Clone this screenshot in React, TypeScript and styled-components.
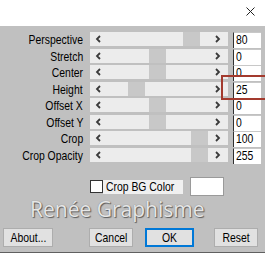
import React from "react";
import styled, { createGlobalStyle } from "styled-components";

const GlobalStyle = createGlobalStyle`
  html, body {
    margin: 0;
    padding: 0;
    background: #ffffff;
  }
`;

const Window = styled.div`
  position: relative;
  width: 265px;
  height: 258px;
  overflow: hidden;
  background: #ffffff;
  font-family: "Liberation Sans", Arial, sans-serif;
  font-size: 13px;
  color: #000;
`;

// the dialog uses a condensed face; squeeze Liberation Sans to match
const Narrow = styled.span<{ $origin?: string }>`
  display: inline-block;
  transform: scaleX(0.8);
  transform-origin: ${(p) => p.$origin || "left"} center;
  white-space: nowrap;
`;

const TitleBar = styled.div`
  height: 26px;
  display: flex;
  justify-content: flex-end;
  align-items: flex-start;
  padding: 7px 10px 0 0;
  box-sizing: border-box;
`;

const Panel = styled.div`
  background: #c0c0c0;
  height: 227px;
  display: flex;
  flex-direction: column;
  padding-top: 6px;
  box-sizing: border-box;
  border-bottom: 1px solid #606060;
`;

const Rows = styled.div`
  display: grid;
  grid-template-columns: 84px 138px 27px;
  grid-auto-rows: 16.5px;
`;

const Label = styled.div`
  text-align: right;
  padding-right: 1px;
  line-height: 15px;
`;

const Slider = styled.div`
  margin-left: 6px;
  width: 138px;
  height: 14px;
  background: #ececec;
  position: relative;
`;

const Arrow = styled.svg<{ $side: "left" | "right" }>`
  position: absolute;
  top: 3px;
  ${(p) => (p.$side === "left" ? "left: 5px;" : "right: 7px;")}
`;

const Thumb = styled.div`
  position: absolute;
  top: 0;
  width: 17px;
  height: 14px;
  background: #c8c8c8;
`;

const Edit = styled.div`
  margin-left: 11px;
  width: 28px;
  height: 16px;
  background: #ffffff;
  border-left: 1px solid #303030;
  border-top: 1px solid #c8c8c8;
  box-sizing: border-box;
  padding-left: 2px;
  line-height: 14px;
`;

const Marker = styled.div`
  position: absolute;
  left: 221px;
  top: 75px;
  width: 50px;
  height: 25px;
  border: 2px solid #a33a2e;
  box-sizing: border-box;
`;

const CheckRow = styled.div`
  display: flex;
  align-items: center;
  margin-top: 13px;
  padding-left: 90px;
  height: 19px;
`;

const CheckBox = styled.span`
  width: 11px;
  height: 11px;
  border: 1px solid #333;
  background: #fff;
`;

const CheckLabel = styled.span`
  width: 80px;
  background: #f0f0f0;
  padding-left: 3px;
  line-height: 14px;
  box-sizing: border-box;
`;

const ColorSwatch = styled.div`
  margin-left: 7px;
  width: 34px;
  height: 19px;
  background: #ffffff;
  border: 1px solid #9a9a9a;
  box-sizing: border-box;
`;

const Watermark = styled.div`
  font-family: "Open Sans", "DejaVu Sans", sans-serif;
  font-size: 21px;
  line-height: 26px;
  color: #e6e6e6;
  text-shadow: 1px 1px 1px #5a5a5a, 0 0 1px #777;
  padding-left: 30px;
`;

const ButtonRow = styled.div`
  display: flex;
  align-items: center;
  padding-left: 3px;
  margin-top: 6px;
`;

const Button = styled.button<{ $w: number; $gap: number; $default?: boolean }>`
  width: ${(p) => p.$w}px;
  height: 19px;
  margin-left: ${(p) => p.$gap}px;
  padding: 0;
  font-family: "Liberation Sans", Arial, sans-serif;
  font-size: 13px;
  color: #000;
  background: #e1e1e1;
  border: ${(p) => (p.$default ? "2px solid #0078d7" : "1px solid #adadad")};
  box-sizing: border-box;
  display: flex;
  justify-content: center;
  align-items: center;
`;

const rows = [
  { label: "Perspective", value: "80", thumb: 93 },
  { label: "Stretch", value: "0", thumb: 59 },
  { label: "Center", value: "0", thumb: 59 },
  { label: "Height", value: "25", thumb: 38 },
  { label: "Offset X", value: "0", thumb: 59 },
  { label: "Offset Y", value: "0", thumb: 59 },
  { label: "Crop", value: "100", thumb: 101 },
  { label: "Crop Opacity", value: "255", thumb: 101 },
];

function Chevron({ side }: { side: "left" | "right" }) {
  const d = side === "left" ? "M5 1 L2 4 L5 7" : "M1 1 L4 4 L1 7";
  return (
    <Arrow $side={side} width="6" height="8" viewBox="0 0 6 8">
      <path d={d} fill="none" stroke="#3a3a3a" strokeWidth="1.8" />
    </Arrow>
  );
}

export default function App() {
  return (
    <Window>
      <GlobalStyle />
      <TitleBar>
        <svg width="9" height="9" viewBox="0 0 9 9">
          <path d="M0.5 0.5 L8.5 8.5 M8.5 0.5 L0.5 8.5" stroke="#222" strokeWidth="1" />
        </svg>
      </TitleBar>
      <Panel>
        <Rows>
          {rows.map((r) => (
            <React.Fragment key={r.label}>
              <Label>
                <Narrow $origin="right">{r.label}</Narrow>
              </Label>
              <Slider>
                <Thumb style={{ left: r.thumb }} />
                <Chevron side="left" />
                <Chevron side="right" />
              </Slider>
              <Edit>
                <Narrow>{r.value}</Narrow>
              </Edit>
            </React.Fragment>
          ))}
        </Rows>
        <CheckRow>
          <CheckBox />
          <CheckLabel>
            <Narrow>Crop BG Color</Narrow>
          </CheckLabel>
          <ColorSwatch />
        </CheckRow>
        <Watermark>Renée Graphisme</Watermark>
        <ButtonRow>
          <Button $w={50} $gap={0}><Narrow $origin="center">About...</Narrow></Button>
          <Button $w={44} $gap={36}><Narrow $origin="center">Cancel</Narrow></Button>
          <Button $w={49} $gap={12} $default><Narrow $origin="center">OK</Narrow></Button>
          <Button $w={44} $gap={20}><Narrow $origin="center">Reset</Narrow></Button>
        </ButtonRow>
      </Panel>
      <Marker />
    </Window>
  );
}
